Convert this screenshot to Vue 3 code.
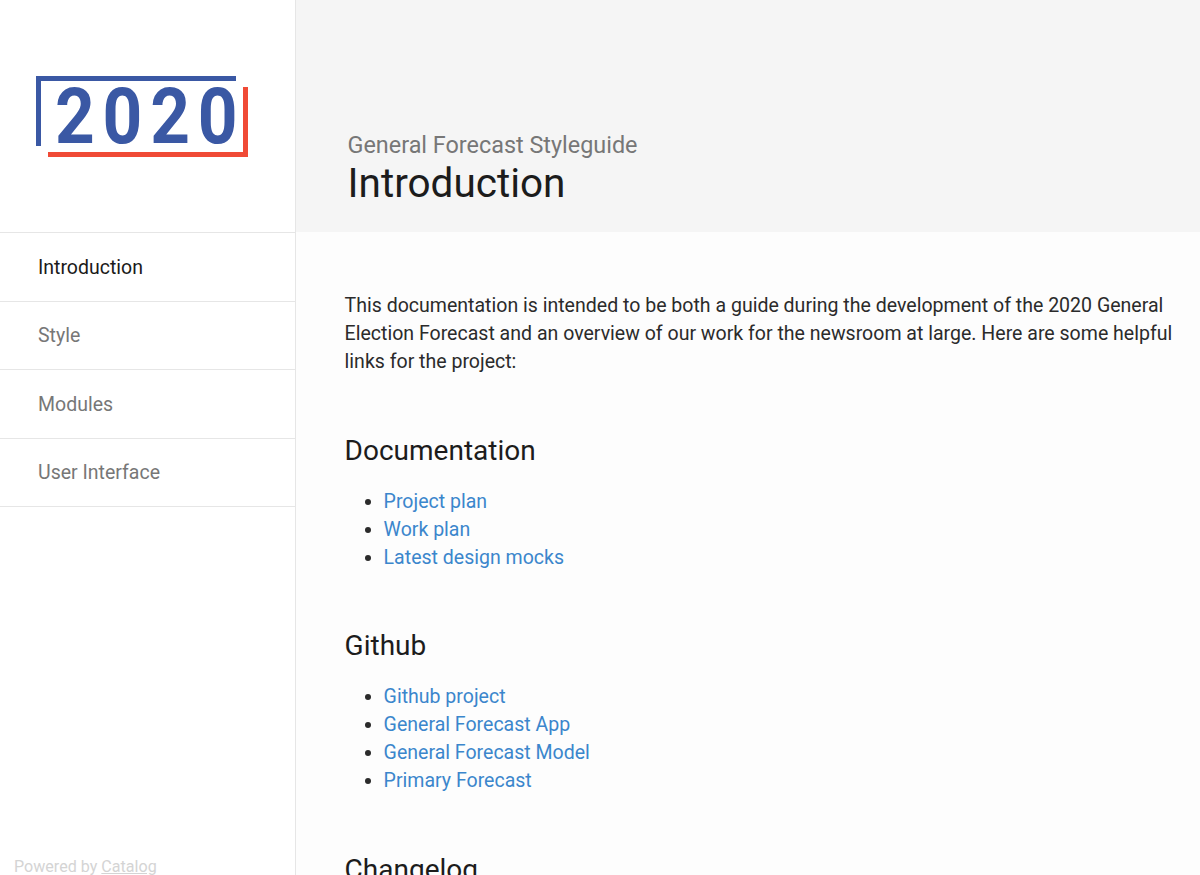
<script setup>
const navItems = ['Introduction', 'Style', 'Modules', 'User Interface']

const sections = [
	{ title: 'Documentation', links: ['Project plan', 'Work plan', 'Latest design mocks'] },
	{ title: 'Github', links: ['Github project', 'General Forecast App', 'General Forecast Model', 'Primary Forecast'] },
	{ title: 'Changelog', links: [] }
]
</script>

<template>
	<div class="app">
		<aside class="sidebar">
			<div class="brand">
				<div class="logo">
					<span class="logo-blue"></span>
					<span class="logo-red"></span>
					<span class="logo-text">2020</span>
				</div>
			</div>
			<nav class="nav">
				<a v-for="(item, i) in navItems" :key="item" class="nav-item" :class="{ active: i === 0 }">{{ item }}</a>
			</nav>
			<p class="powered">Powered by <a>Catalog</a></p>
		</aside>
		<main class="main">
			<header class="page-header">
				<div class="subtitle">General Forecast Styleguide</div>
				<h1>Introduction</h1>
			</header>
			<div class="content">
				<p class="intro">This documentation is intended to be both a guide during the development of the 2020 General Election Forecast and an overview of our work for the newsroom at large. Here are some helpful links for the project:</p>
				<section v-for="s in sections" :key="s.title">
					<h2>{{ s.title }}</h2>
					<ul v-if="s.links.length">
						<li v-for="l in s.links" :key="l"><a>{{ l }}</a></li>
					</ul>
				</section>
			</div>
		</main>
	</div>
</template>

<style scoped>
.app {
	display: flex;
	height: 875px;
	overflow: hidden;
	font-family: Roboto, "Liberation Sans", sans-serif;
	background: #fff;
}

.sidebar {
	position: relative;
	flex: 0 0 296px;
	box-sizing: border-box;
	border-right: 1px solid #e6e6e6;
	background: #fff;
}

.brand {
	height: 232px;
	padding: 76px 0 0 36px;
	box-sizing: border-box;
}

.logo {
	position: relative;
	width: 211.5px;
	height: 81px;
}

.logo-blue {
	position: absolute;
	left: 0;
	top: 0;
	width: 200px;
	height: 69.5px;
	border-top: 5.5px solid #3a58a4;
	border-left: 5.5px solid #3a58a4;
	box-sizing: border-box;
}

.logo-red {
	position: absolute;
	right: 0;
	bottom: 0;
	width: 199.5px;
	height: 70px;
	border-right: 5.5px solid #f04a36;
	border-bottom: 5.5px solid #f04a36;
	box-sizing: border-box;
}

.logo-text {
	position: absolute;
	left: 19px;
	top: -3px;
	font-size: 77px;
	line-height: 88px;
	font-weight: 700;
	letter-spacing: 8.7px;
	color: #3a58a4;
	transform: scaleX(0.9);
	transform-origin: left center;
}

.nav {
	border-top: 1px solid #e6e6e6;
}

.nav-item {
	display: flex;
	align-items: center;
	height: 68.6px;
	box-sizing: border-box;
	padding: 0.6px 0 0 38px;
	border-bottom: 1px solid #e6e6e6;
	font-size: 19.5px;
	color: #777;
}

.nav-item.active {
	color: #1a1a1a;
}

.powered {
	position: absolute;
	left: 14px;
	bottom: -2px;
	margin: 0;
	font-size: 16.1px;
	line-height: 20px;
	color: #d4d4d4;
}

.powered a {
	text-decoration: underline;
}

.main {
	flex: 1;
	min-width: 0;
	background: #fdfdfd;
}

.page-header {
	height: 232px;
	box-sizing: border-box;
	padding: 130px 0 0 51.5px;
	background: #f5f5f5;
}

.subtitle {
	font-size: 23.4px;
	line-height: 30px;
	color: #777;
}

h1 {
	margin: 0;
	font-size: 40.5px;
	line-height: 46px;
	font-weight: 400;
	color: #1c1c1c;
}

.content {
	padding: 60px 0 0 48.6px;
	width: 848px;
	font-size: 19.55px;
	line-height: 28px;
	color: #2b2b2b;
}

.intro {
	margin: 0;
}

h2 {
	margin: 56.5px 0 0;
	font-size: 28px;
	line-height: 36px;
	font-weight: 400;
	color: #1c1c1c;
}

ul {
	margin: 19px 0 0;
	padding-left: 39px;
}

li a {
	color: #3b86cc;
}
</style>
